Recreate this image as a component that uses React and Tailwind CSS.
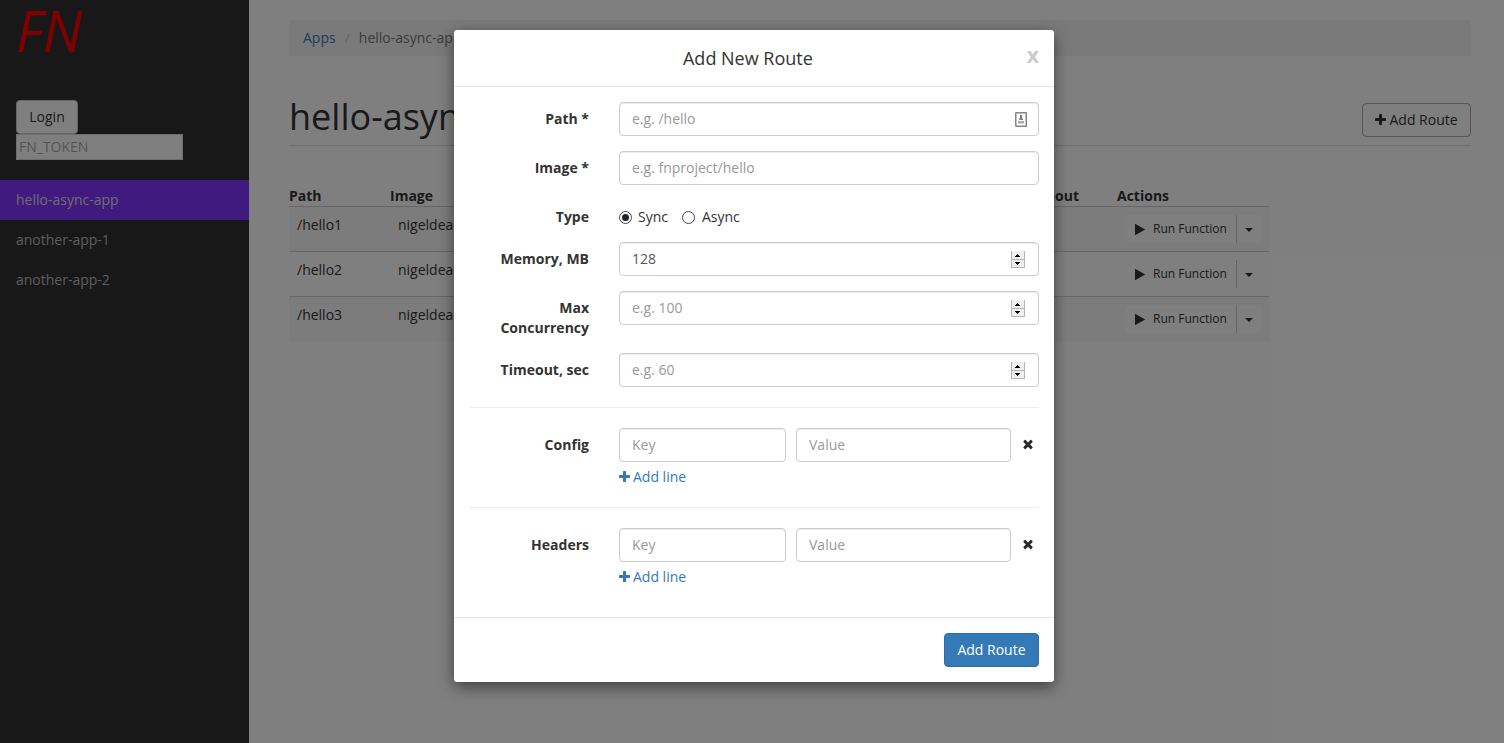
import React from "react";

function Plus({ className = "" }) {
  return (
    <svg viewBox="192 128 1408 1536" className={"h-3 w-[11px] shrink-0 fill-current " + className}>
      <path d="M1600 736v192q0 40-28 68t-68 28h-416v416q0 40-28 68t-68 28h-192q-40 0-68-28t-28-68v-416h-416q-40 0-68-28t-28-68v-192q0-40 28-68t68-28h416v-416q0-40 28-68t68-28h192q40 0 68 28t28 68v416h416q40 0 68 28t28 68z" />
    </svg>
  );
}

function Times() {
  return (
    <svg viewBox="0 0 1792 1792" className="h-3.5 w-3.5 fill-[#2b2b2b]">
      <path d="M1490 1322q0 40-28 68l-136 136q-28 28-68 28t-68-28l-294-294-294 294q-28 28-68 28t-68-28l-136-136q-28-28-28-68t28-68l294-294-294-294q-28-28-28-68t28-68l136-136q28-28 68-28t68 28l294 294 294-294q28-28 68-28t68 28l136 136q28 28 28 68t-28 68l-294 294 294 294q28 28 28 68z" />
    </svg>
  );
}

function Play() {
  return (
    <svg viewBox="192 128 1408 1536" className="h-[11px] w-2.5 fill-current">
      <path d="M1576 927l-1328 738q-23 13-39.5 3t-16.5-36v-1472q0-26 16.5-36t39.5 3l1328 738q23 13 23 31t-23 31z" />
    </svg>
  );
}

function Spinner() {
  return (
    <svg viewBox="0 0 14 17" className="h-[17px] w-3.5 shrink-0" shapeRendering="crispEdges">
      <rect width="14" height="17" fill="#b4b4b4" />
      <rect x="1" y="0" width="12" height="8" fill="#f0f0f0" />
      <rect x="1" y="9" width="12" height="7" fill="#f0f0f0" />
      <path d="M6 3h1v1h1v1h1v1h-5v-1h1v-1h1z" fill="#000" />
      <path d="M4 11h5v1h-1v1h-1v1h-1v-1h-1v-1h-1z" fill="#000" />
    </svg>
  );
}

function AutofillBadge() {
  return (
    <svg viewBox="0 0 12 15" className="h-[15px] w-3 shrink-0">
      <rect x="0.75" y="0.75" width="10.5" height="13.5" rx="0.5" fill="#fff" stroke="#858585" strokeWidth="1.5" />
      <path d="M5 3h2v2.3L8.2 8H3.8L5 5.3z" fill="#808080" />
      <rect x="3" y="9" width="6" height="2.5" fill="#aaa" />
    </svg>
  );
}

function Field({ placeholder, value, width = "w-[420px]", adornment, pad = "pr-[13px]" }) {
  return (
    <div
      className={
        "flex h-[34px] items-center justify-between rounded border border-[#ccc] bg-white pl-3 shadow-[inset_0_1px_1px_rgba(0,0,0,0.075)] " +
        width + " " + pad
      }
    >
      <span className={value ? "text-[#555]" : "text-[#999]"}>{value || placeholder}</span>
      {adornment}
    </div>
  );
}

function Row({ label, children }) {
  return (
    <div className="mb-[15px] flex">
      <div className="w-[120px] shrink-0 pt-[7px] text-right font-bold">{label}</div>
      <div className="ml-[30px] flex-1">{children}</div>
    </div>
  );
}

function Radio({ checked }) {
  return (
    <span className="flex h-[13px] w-[13px] items-center justify-center rounded-full border border-[#444] bg-white">
      {checked && <span className="h-[7px] w-[7px] rounded-full bg-[#222]" />}
    </span>
  );
}

function Pairs({ label }) {
  return (
    <div className="flex">
      <div className="w-[120px] shrink-0 pt-[7px] text-right font-bold">{label}</div>
      <div className="ml-[30px] flex-1">
        <div className="flex items-center">
          <Field placeholder="Key" width="w-[167px]" />
          <Field placeholder="Value" width="ml-2.5 w-[215px]" />
          <div className="mb-0.5 ml-[10px]">
            <Times />
          </div>
        </div>
        <div className="mt-[5px] flex h-5 items-center text-[#337ab7]">
          <Plus />
          <span className="ml-[3px]">Add line</span>
        </div>
      </div>
    </div>
  );
}

function Sidebar() {
  return (
    <aside className="w-[249px] shrink-0 bg-[#303030]">
      <div className="h-[100px] pl-4 text-[56px] leading-[61px] text-[#ff0000] italic">FN</div>
      <div className="flex flex-col items-start pl-4">
        <button className="h-[34px] w-[62px] rounded border border-[#ccc] bg-white text-[#333]">Login</button>
        <div className="flex h-[26px] w-[167px] items-center border border-[#ddd] bg-white pl-0.5 text-[#a9a9a9]">
          FN_TOKEN
        </div>
      </div>
      <nav className="mt-5">
        <div className="flex h-10 items-center bg-[#8035ff] pl-4 text-[#ddd]">hello-async-app</div>
        <div className="flex h-10 items-center pl-4 text-[#bbb]">another-app-1</div>
        <div className="flex h-10 items-center pl-4 text-[#bbb]">another-app-2</div>
      </nav>
    </aside>
  );
}

function RouteTable() {
  return (
    <table className="w-[980px] table-fixed border-collapse text-left">
      <colgroup>
        <col className="w-[101px]" />
        <col className="w-[628px]" />
        <col className="w-[99px]" />
        <col className="w-[152px]" />
      </colgroup>
      <thead>
        <tr className="h-5 font-bold">
          <th>Path</th>
          <th>Image</th>
          <th className="pr-[38px] text-right">Timeout</th>
          <th>Actions</th>
        </tr>
      </thead>
      <tbody>
        {["/hello1", "/hello2", "/hello3"].map((path) => (
          <tr key={path} className="h-[45px] border-t border-[#ccc] odd:bg-[#f9f9f9]">
            <td className="p-2 align-top">{path}</td>
            <td className="p-2 align-top">nigeldeakin/hello</td>
            <td />
            <td className="p-2 pl-[9px] align-top">
              <div className="flex h-7 text-xs">
                <div className="flex w-[111px] items-center rounded-l-sm border-r border-[#ccc] bg-white pl-[9px]">
                  <Play />
                  <span className="ml-2">Run Function</span>
                </div>
                <div className="flex w-6 items-center justify-center rounded-r-sm bg-white">
                  <span className="mt-0.5 h-0 w-0 border-x-4 border-t-4 border-x-transparent border-t-[#333]" />
                </div>
              </div>
            </td>
          </tr>
        ))}
      </tbody>
    </table>
  );
}

function Modal() {
  return (
    <div className="h-[652px] w-[600px] rounded-[3px] bg-white shadow-[0_5px_15px_rgba(0,0,0,0.5)]">
      <header className="flex h-[57px] items-start border-b border-[#e5e5e5] px-[15px] pt-[15px]">
        <h4 className="flex-1 text-center text-lg leading-[26px]">Add New Route</h4>
        <span className="text-[21px] leading-5 font-bold text-[#ccc]">x</span>
      </header>
      <div className="h-[530px] px-[15px] pt-[15px]">
        <Row label="Path *">
          <Field placeholder="e.g. /hello" adornment={<AutofillBadge />} pad="pr-[11px]" />
        </Row>
        <Row label="Image *">
          <Field placeholder="e.g. fnproject/hello" />
        </Row>
        <Row label="Type">
          <div className="flex h-[27px] items-center pt-[7px]">
            <Radio checked />
            <span className="ml-1.5">Sync</span>
            <span className="ml-[14px]">
              <Radio />
            </span>
            <span className="ml-[7px]">Async</span>
          </div>
        </Row>
        <Row label="Memory, MB">
          <Field value="128" adornment={<Spinner />} />
        </Row>
        <Row label="Max Concurrency">
          <Field placeholder="e.g. 100" adornment={<Spinner />} />
        </Row>
        <Row label="Timeout, sec">
          <Field placeholder="e.g. 60" adornment={<Spinner />} />
        </Row>
        <hr className="mt-5 mb-5 border-[#eee]" />
        <Pairs label="Config" />
        <hr className="my-5 border-[#eee]" />
        <Pairs label="Headers" />
      </div>
      <footer className="flex h-[65px] justify-end border-t border-[#e5e5e5] p-[15px]">
        <button className="h-[34px] w-[95px] rounded border border-[#2e6da4] bg-[#337ab7] text-white">
          Add Route
        </button>
      </footer>
    </div>
  );
}

export default function App() {
  return (
    <div className="relative h-[743px] w-[1504px] overflow-hidden bg-white font-['Open_Sans',sans-serif] text-sm leading-5 text-[#333]">
      <div className="flex h-full">
        <Sidebar />
        <main className="flex-1 pt-5 pr-[33px] pl-10">
          <div className="flex h-9 items-center rounded bg-[#f5f5f5] px-[14px]">
            <span className="text-[#337ab7]">Apps</span>
            <span className="px-[9px] text-[#ccc]">/</span>
            <span className="text-[#777]">hello-async-app</span>
          </div>
          <div className="mt-10 flex h-[50px] items-start justify-between border-b border-[#ddd]">
            <h1 className="text-4xl leading-[42px]">hello-async-app</h1>
            <button className="mt-[7px] flex h-[34px] w-[109px] items-center rounded border border-[#aaa] pl-3">
              <Plus />
              <span className="ml-[3.5px]">Add Route</span>
            </button>
          </div>
          <div className="mt-10">
            <RouteTable />
          </div>
        </main>
      </div>
      <div className="absolute inset-0 flex items-start bg-black/50 pt-[30px] pl-[454px]">
        <Modal />
      </div>
    </div>
  );
}
